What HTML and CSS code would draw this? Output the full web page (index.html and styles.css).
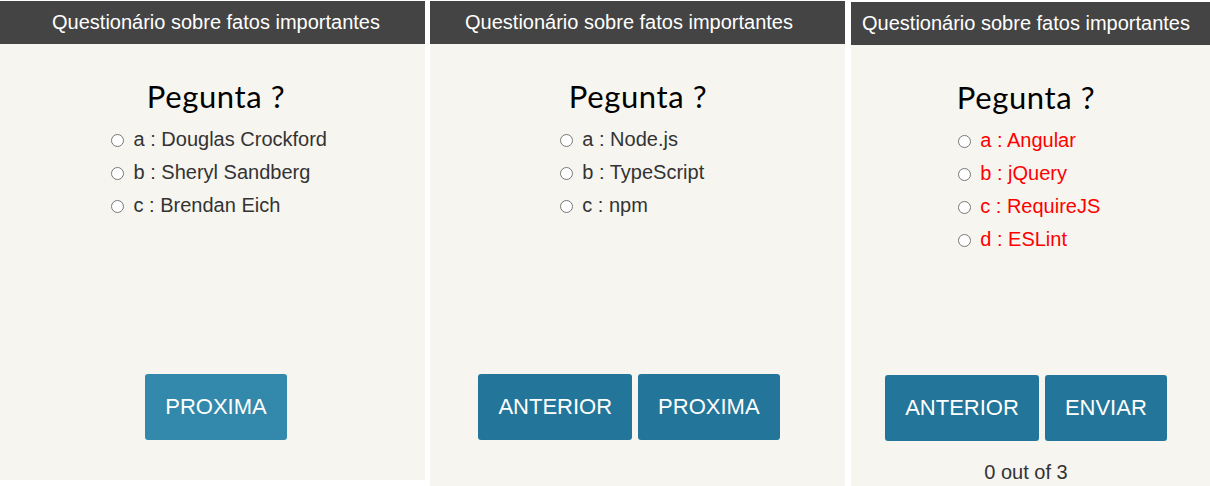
FILE: index.html
```html
<!DOCTYPE html>
<html lang="pt">
<head>
<meta charset="utf-8">
<title>Questionário</title>
<link rel="stylesheet" href="styles.css">
</head>
<body>
<main class="quizzes">
  <section class="quiz quiz--one">
    <header class="quiz-header"><span class="shift">Questionário sobre fatos importantes</span></header>
    <div class="quiz-body shift">
      <h2 class="question">Pegunta ?</h2>
      <ul class="options">
        <li><label><input type="radio" name="q1"> a : Douglas Crockford</label></li>
        <li><label><input type="radio" name="q1"> b : Sheryl Sandberg</label></li>
        <li><label><input type="radio" name="q1"> c : Brendan Eich</label></li>
      </ul>
    </div>
    <div class="actions shift">
      <button class="btn btn--hover" type="button">PROXIMA</button>
    </div>
  </section>

  <section class="quiz quiz--two">
    <header class="quiz-header"><span class="shift">Questionário sobre fatos importantes</span></header>
    <div class="quiz-body shift">
      <h2 class="question">Pegunta ?</h2>
      <ul class="options">
        <li><label><input type="radio" name="q2"> a : Node.js</label></li>
        <li><label><input type="radio" name="q2"> b : TypeScript</label></li>
        <li><label><input type="radio" name="q2"> c : npm</label></li>
      </ul>
    </div>
    <div class="actions shift">
      <button class="btn" type="button">ANTERIOR</button>
      <button class="btn" type="button">PROXIMA</button>
    </div>
  </section>

  <section class="quiz quiz--three">
    <header class="quiz-header"><span class="shift">Questionário sobre fatos importantes</span></header>
    <div class="quiz-body shift">
      <h2 class="question">Pegunta ?</h2>
      <ul class="options options--wrong">
        <li><label><input type="radio" name="q3"> a : Angular</label></li>
        <li><label><input type="radio" name="q3"> b : jQuery</label></li>
        <li><label><input type="radio" name="q3"> c : RequireJS</label></li>
        <li><label><input type="radio" name="q3"> d : ESLint</label></li>
      </ul>
    </div>
    <div class="actions shift">
      <button class="btn" type="button">ANTERIOR</button>
      <button class="btn" type="button">ENVIAR</button>
    </div>
    <p class="score shift">0 out of 3</p>
  </section>
</main>
</body>
</html>
```

FILE: styles.css
```css
* { box-sizing: border-box; }

html, body {
  margin: 0;
  padding: 0;
  background: #ffffff;
  height: 486px;
  overflow: hidden;
}

body {
  font-family: "Liberation Sans", Arial, sans-serif;
  color: #333333;
}

.quizzes {
  display: flex;
  align-items: flex-start;
  padding-top: 1px;
  height: 486px;
}

.quiz {
  background: #f7f5f0;
  display: flex;
  flex-direction: column;
  overflow: hidden;
}

.quiz--one {
  width: 425px;
  height: 479px;
}
.quiz--two {
  width: 415px;
  height: 485px;
  margin-left: 5px;
}
.quiz--three {
  width: 359px;
  height: 484px;
  margin-left: 6px;
  margin-top: 1px;
}

.quiz--one .shift { padding-left: 7px; }
.quiz--two .shift { padding-right: 17px; }
.quiz--two .question { padding-left: 18px; }
.quiz--three .shift { padding-right: 9px; }

.quiz-header {
  background: #444444;
  color: #ffffff;
  height: 43px;
  font-size: 20px;
  line-height: 43px;
  text-align: center;
  white-space: nowrap;
}
.quiz-header .shift { display: block; }

.quiz-body {
  height: 330px;
  display: flex;
  flex-direction: column;
  align-items: center;
}

.question {
  margin: 33px 0 0;
  font-family: Lato, "Open Sans", sans-serif;
  font-weight: 400;
  font-size: 31px;
  letter-spacing: 0.6px;
  line-height: 38px;
  color: #000000;
}

.options {
  list-style: none;
  margin: 8px 0 0;
  padding: 0 0 0 6px;
  font-size: 20px;
  line-height: 33px;
}
.options label { white-space: nowrap; }
.options input {
  margin: 0 4px 0 0;
  width: 13px;
  height: 13px;
  vertical-align: -1px;
}
.options--wrong { color: #ff0000; }

.actions {
  display: flex;
  justify-content: center;
  gap: 6px;
}

.btn {
  font-family: "Liberation Sans", Arial, sans-serif;
  font-size: 22px;
  line-height: 26px;
  color: #ffffff;
  background: #237699;
  border: 0;
  border-radius: 3px;
  padding: 20px 20px;
  height: 66px;
}
.btn--hover { background: #3289ab; }

.score {
  margin: 20px 0 0;
  text-align: center;
  font-size: 20px;
  line-height: 23px;
}
```
